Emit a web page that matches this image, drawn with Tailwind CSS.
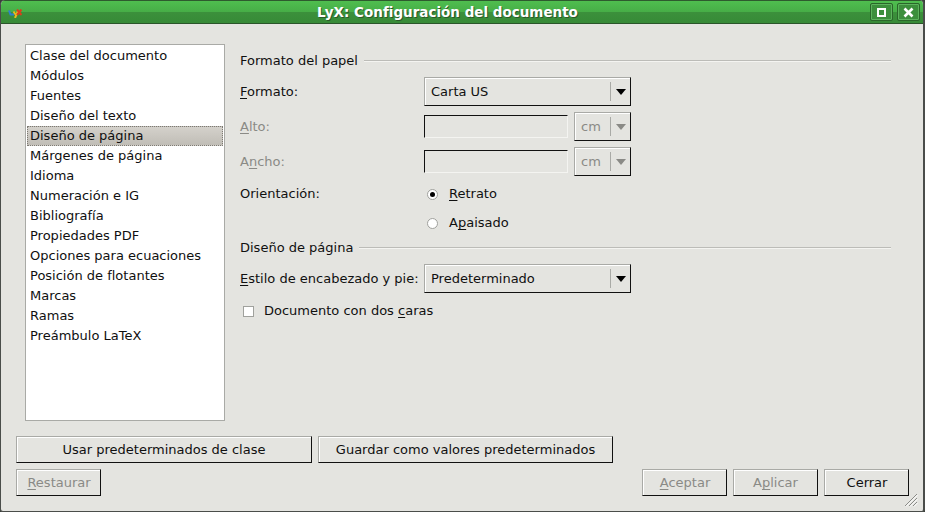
<!DOCTYPE html>
<html lang="es">
<head>
<meta charset="UTF-8" />
<title>LyX: Configuración del documento</title>
<script src="https://cdn.jsdelivr.net/npm/@tailwindcss/browser@4"></script>
</head>
<body class="bg-[#3a3f3a] overflow-hidden">
<div class="relative w-[925px] h-[512px] flex flex-col overflow-hidden rounded-t-[5px] rounded-b-[3px] bg-[#e4e4e0] border-l border-r-2 border-b border-[#4a4d4a] font-['DejaVu_Sans',sans-serif] text-[13px] leading-[16px] text-[#101010]">

  <!-- title bar -->
  <div class="h-[24px] shrink-0 -ml-px -mr-[2px] flex items-center pl-[8px] pr-[5px] border-t border-b border-t-[#2e5a2e] border-b-[#2a552a] bg-[linear-gradient(to_bottom,#4fbe4f_0%,#47ae47_48%,#3b903b_52%,#378a37_100%)]">
    <svg class="w-[14px] h-[9px] mt-[3px] shrink-0" viewBox="0 0 14 9" fill="none" stroke-width="2">
      <path d="M1 1.5 L2.5 5.5 L6 5.5" stroke="#2f7fd0" />
      <path d="M5.5 2.5 L7.5 5.5 M10 2 L7 9" stroke="#e8b820" />
      <path d="M9 0.5 L13.5 6 M13.5 0.5 L9 6" stroke="#d8401c" />
    </svg>
    <div class="flex-1 pl-[3px] text-center text-[13.5px] font-bold text-white [text-shadow:1px_1px_0_#2a5a2a]">LyX: Configuración del documento</div>
    <div class="flex gap-[4px]">
      <div class="w-[23px] h-[18px] rounded-[2px] border border-[#2a662a] shadow-[inset_0_0_0_1px_#5db35d] bg-[#3c8f3c] flex items-center justify-center">
        <div class="w-[9px] h-[9px] border-2 border-white"></div>
      </div>
      <div class="w-[23px] h-[18px] rounded-[2px] border border-[#2a662a] shadow-[inset_0_0_0_1px_#5db35d] bg-[#3c8f3c] flex items-center justify-center">
        <svg class="w-[11px] h-[11px]" viewBox="0 0 11 11"><path d="M1.5 1.5 L9.5 9.5 M9.5 1.5 L1.5 9.5" stroke="#fff" stroke-width="2.6" /></svg>
      </div>
    </div>
  </div>

  <!-- main -->
  <div class="flex mt-[20px] h-[377px] pl-[24px]">
    <ul class="w-[200px] h-[377px] shrink-0 bg-white border border-[#a9aaa6] p-px">
      <li class="h-[20px] pl-[3px] flex items-center">Clase del documento</li>
      <li class="h-[20px] pl-[3px] flex items-center">Módulos</li>
      <li class="h-[20px] pl-[3px] flex items-center">Fuentes</li>
      <li class="h-[20px] pl-[3px] flex items-center">Diseño del texto</li>
      <li class="h-[20px] pl-[2px] flex items-center border border-dotted border-[#7d7a74] bg-[linear-gradient(to_bottom,#d4d1cb,#c0bdb6)]">Diseño de página</li>
      <li class="h-[20px] pl-[3px] flex items-center">Márgenes de página</li>
      <li class="h-[20px] pl-[3px] flex items-center">Idioma</li>
      <li class="h-[20px] pl-[3px] flex items-center">Numeración e IG</li>
      <li class="h-[20px] pl-[3px] flex items-center">Bibliografía</li>
      <li class="h-[20px] pl-[3px] flex items-center">Propiedades PDF</li>
      <li class="h-[20px] pl-[3px] flex items-center">Opciones para ecuaciones</li>
      <li class="h-[20px] pl-[3px] flex items-center">Posición de flotantes</li>
      <li class="h-[20px] pl-[3px] flex items-center">Marcas</li>
      <li class="h-[20px] pl-[3px] flex items-center">Ramas</li>
      <li class="h-[20px] pl-[3px] flex items-center">Preámbulo LaTeX</li>
    </ul>

    <div class="ml-[15px] w-[651px] pt-[8px] flex flex-col">
      <!-- Formato del papel -->
      <div class="h-[18px] flex items-center gap-[6px]">
        <span>Formato del papel</span>
        <div class="flex-1 h-[2px] border-t border-[#bcbcb8] bg-[#f4f4f1]"></div>
      </div>
      <div class="mt-[7px] h-[29px] flex items-center">
        <label class="w-[184px]"><u class="underline-offset-2 [text-decoration-skip-ink:none]">F</u>ormato:</label>
        <div class="w-[207px] h-[29px] flex items-center pl-[6px] border border-[#a9aaa6] border-r-[#111] border-b-[#111] shadow-[inset_1px_1px_0_#fff]">
          <span class="flex-1">Carta US</span>
          <div class="w-px h-[19px] bg-[#a9aaa6]"></div>
          <div class="w-0 h-0 ml-[5px] mr-[4px] border-x-[5px] border-x-transparent border-t-[6px] border-t-black"></div>
        </div>
      </div>
      <div class="mt-[6px] h-[29px] flex items-center text-[#8a8a86]">
        <label class="w-[184px]"><u class="underline-offset-2 [text-decoration-skip-ink:none]">A</u>lto:</label>
        <div class="w-[144px] h-[23px] border border-[#111] border-r-[#f4f4f1] border-b-[#f4f4f1]"></div>
        <div class="ml-[6px] w-[57px] h-[29px] flex items-center pl-[6px] border border-[#a9aaa6] border-r-[#111] border-b-[#111] shadow-[inset_1px_1px_0_#fff]">
          <span class="flex-1">cm</span>
          <div class="w-px h-[19px] bg-[#a9aaa6]"></div>
          <div class="w-0 h-0 ml-[5px] mr-[4px] border-x-[5px] border-x-transparent border-t-[6px] border-t-[#8a8a86]"></div>
        </div>
      </div>
      <div class="mt-[6px] h-[29px] flex items-center text-[#8a8a86]">
        <label class="w-[184px]">A<u class="underline-offset-2 [text-decoration-skip-ink:none]">n</u>cho:</label>
        <div class="w-[144px] h-[23px] border border-[#111] border-r-[#f4f4f1] border-b-[#f4f4f1]"></div>
        <div class="ml-[6px] w-[57px] h-[29px] flex items-center pl-[6px] border border-[#a9aaa6] border-r-[#111] border-b-[#111] shadow-[inset_1px_1px_0_#fff]">
          <span class="flex-1">cm</span>
          <div class="w-px h-[19px] bg-[#a9aaa6]"></div>
          <div class="w-0 h-0 ml-[5px] mr-[4px] border-x-[5px] border-x-transparent border-t-[6px] border-t-[#8a8a86]"></div>
        </div>
      </div>
      <div class="mt-[7px] h-[22px] flex items-center">
        <label class="w-[187px]">Orientación:</label>
        <div class="w-[11px] h-[11px] rounded-full border border-[#a0a19d] bg-white flex items-center justify-center"><div class="w-[5px] h-[5px] rounded-full bg-black"></div></div>
        <span class="ml-[11px]"><u class="underline-offset-2 [text-decoration-skip-ink:none]">R</u>etrato</span>
      </div>
      <div class="mt-[7px] h-[22px] flex items-center">
        <div class="w-[187px]"></div>
        <div class="w-[11px] h-[11px] rounded-full border border-[#a0a19d] bg-white"></div>
        <span class="ml-[11px]">A<u class="underline-offset-2 [text-decoration-skip-ink:none]">p</u>aisado</span>
      </div>
      <!-- Diseño de página -->
      <div class="mt-[5px] h-[18px] flex items-center gap-[6px]">
        <span>Diseño de página</span>
        <div class="flex-1 h-[2px] border-t border-[#bcbcb8] bg-[#f4f4f1]"></div>
      </div>
      <div class="mt-[7px] h-[29px] flex items-center">
        <label class="w-[184px] whitespace-nowrap"><u class="underline-offset-2 [text-decoration-skip-ink:none]">E</u>stilo de encabezado y pie:</label>
        <div class="w-[207px] h-[29px] flex items-center pl-[6px] border border-[#a9aaa6] border-r-[#111] border-b-[#111] shadow-[inset_1px_1px_0_#fff]">
          <span class="flex-1">Predeterminado</span>
          <div class="w-px h-[19px] bg-[#a9aaa6]"></div>
          <div class="w-0 h-0 ml-[5px] mr-[4px] border-x-[5px] border-x-transparent border-t-[6px] border-t-black"></div>
        </div>
      </div>
      <div class="mt-[9px] h-[18px] flex items-center pl-[3px]">
        <div class="w-[11px] h-[11px] bg-white border border-[#a0a19d]"></div>
        <span class="ml-[10px]">Documento con dos <u class="underline-offset-2 [text-decoration-skip-ink:none]">c</u>aras</span>
      </div>
    </div>
  </div>

  <!-- bottom buttons -->
  <div class="mt-[15px] pl-[15px] flex gap-[6px]">
    <button class="w-[296px] h-[27px] border border-[#a9aaa6] border-r-[#111] border-b-[#111] shadow-[inset_1px_1px_0_#fff]">Usar predeterminados de clase</button>
    <button class="w-[295px] h-[27px] border border-[#a9aaa6] border-r-[#111] border-b-[#111] shadow-[inset_1px_1px_0_#fff]">Guardar como valores predeterminados</button>
  </div>
  <div class="mt-[6px] pl-[15px] pr-[14px] flex gap-[6px]">
    <button class="w-[85px] h-[27px] pl-px text-[#8a8a86] border border-[#a9aaa6] border-r-[#111] border-b-[#111] shadow-[inset_1px_1px_0_#fff]"><u class="underline-offset-2 [text-decoration-skip-ink:none]">R</u>estaurar</button>
    <div class="flex-1"></div>
    <button class="w-[85px] h-[27px] pl-px text-[#8a8a86] border border-[#a9aaa6] border-r-[#111] border-b-[#111] shadow-[inset_1px_1px_0_#fff]"><u class="underline-offset-2 [text-decoration-skip-ink:none]">A</u>ceptar</button>
    <button class="w-[85px] h-[27px] text-[#8a8a86] border border-[#a9aaa6] border-r-[#111] border-b-[#111] shadow-[inset_1px_1px_0_#fff]">A<u class="underline-offset-2 [text-decoration-skip-ink:none]">p</u>licar</button>
    <button class="w-[85px] h-[27px] pl-px border border-[#a9aaa6] border-r-[#111] border-b-[#111] shadow-[inset_1px_1px_0_#fff]">Cerrar</button>
  </div>

  <!-- size grip -->
  <svg class="absolute right-[5px] bottom-[4px] w-[14px] h-[14px]" viewBox="0 0 14 14" fill="none" stroke-width="1">
    <path d="M1 13 L13 1 M5 13 L13 5 M9 13 L13 9" stroke="#8a8b87" />
    <path d="M2 13.5 L13.5 2 M6 13.5 L13.5 6 M10 13.5 L13.5 10" stroke="#fff" />
  </svg>
</div>
</body>
</html>
